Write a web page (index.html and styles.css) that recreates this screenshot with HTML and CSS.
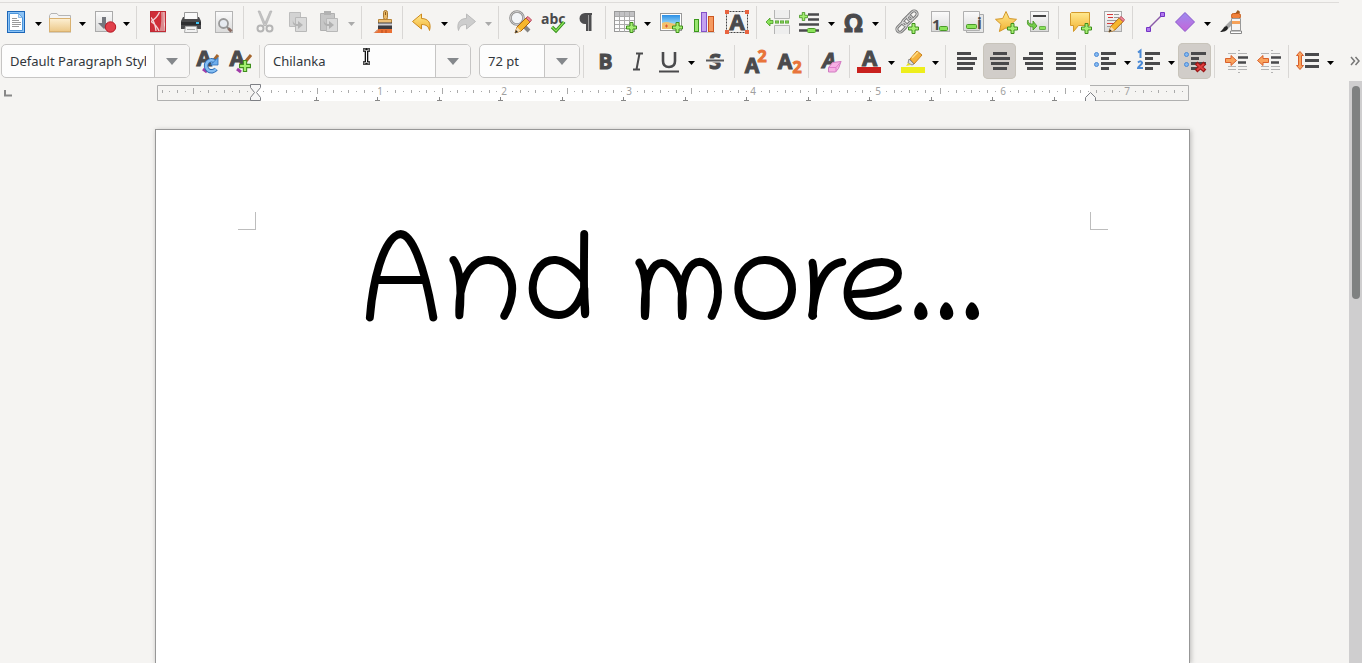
FILE: index.html
```html
<!DOCTYPE html>
<html lang="en">
<head>
<meta charset="utf-8">
<title>Writer</title>
<link rel="stylesheet" href="styles.css">
</head>
<body>
<svg class="defs" aria-hidden="true">
  <defs>
    <linearGradient id="g-paper" x1="0" y1="0" x2="0" y2="1"><stop offset="0" stop-color="#fbfbfb"/><stop offset="1" stop-color="#dadada"/></linearGradient>
    <linearGradient id="g-gold" x1="0" y1="0" x2="0" y2="1"><stop offset="0" stop-color="#ffe98f"/><stop offset="1" stop-color="#f2b233"/></linearGradient>
    <linearGradient id="g-folder" x1="0" y1="0" x2="0" y2="1"><stop offset="0" stop-color="#fdf0d4"/><stop offset="1" stop-color="#ecc888"/></linearGradient>
    <linearGradient id="g-violet" x1="0" y1="0" x2="0" y2="1"><stop offset="0" stop-color="#9b8cf0"/><stop offset="1" stop-color="#c765d8"/></linearGradient>
    <linearGradient id="g-sky" x1="0" y1="0" x2="0" y2="1"><stop offset="0" stop-color="#2b8fe6"/><stop offset="1" stop-color="#a8e2fa"/></linearGradient>
    <symbol id="plus" viewBox="0 0 11 11"><path d="M4 .5h3V4h3.500v3H7v3.500H4V7H.5V4H4z" fill="#a5ee72" stroke="#3f8f1c"/></symbol>
    <symbol id="pill" viewBox="0 0 9 5"><rect x=".5" y=".5" width="8" height="4" rx="1" fill="#8be35a" stroke="#4a9a28"/></symbol>
    <symbol id="arrow" viewBox="0 0 7 4"><path d="M0 0h7L3.500 4z" fill="currentColor"/></symbol>
    <symbol id="pencil" viewBox="0 0 18 18"><path d="M1 17l2-6L12 2l4 4-9 9z" fill="#f6b62c" stroke="#a8620d"/><path d="M12 2l2-1.500 3.500 3.500L16 6z" fill="#f08a9a" stroke="#b84a58"/><path d="M3 11l4 4-6 2z" fill="#f7dcae"/><path d="M1 17l1-3 2 2z" fill="#222"/></symbol>
  </defs>
</svg>

<header class="toolbars">
  <div class="bar bar-main" role="toolbar" aria-label="Standard">
    <button class="tool" aria-label="New"><svg viewBox="0 0 25 24"><rect x="2.500" y="1.500" width="17" height="21" fill="#8cc3f5" stroke="#1c66b8"/><path d="M4.500 3.500h9l4 4v13h-13z" fill="#fff" stroke="#4b96dc"/><path d="M13.500 3.500v4h4z" fill="#cfe3f6" stroke="#4b96dc" stroke-width=".6"/><path d="M7 8.500h5M7 10.500h7M7 12.500h9M7 14.500h9M7 16.500h7" stroke="#999"/></svg></button>
    <button class="drop" aria-label="New options"><svg><use href="#arrow"/></svg></button>
    <button class="tool" aria-label="Open"><svg viewBox="0 0 25 24"><path d="M.5 12V5.500L2 3.500h6l1.500 2H21.500V12z" fill="#f4f4f4" stroke="#b5b5b5"/><rect x=".5" y="8.500" width="21" height="13" fill="url(#g-folder)" stroke="#d9b170"/><path d="M0 22.500h22" stroke="#d4cdc0"/></svg></button>
    <button class="drop" aria-label="Open options"><svg><use href="#arrow"/></svg></button>
    <button class="tool" aria-label="Save"><svg viewBox="0 0 25 24"><rect x="2.500" y="1.500" width="17" height="20" fill="url(#g-paper)" stroke="#aaa"/><path d="M9 7h4v6h4l-6 6-6-6h4z" fill="#74777e"/><circle cx="17.500" cy="17" r="5.200" fill="#e0404a" stroke="#b81824"/></svg></button>
    <button class="drop" aria-label="Save options"><svg><use href="#arrow"/></svg></button>
    <span class="sep"></span>
    <button class="tool" aria-label="Export as PDF"><svg viewBox="0 0 25 24"><rect x="5" y="1" width="16" height="21" fill="#cf2e38"/><path d="M16 2h2.500c-.5 7 0 13 2 19h-6c2-6 2-13 1.500-19z" fill="#d98a8e"/><path d="M14.500 2C13 6 10 9 6 11.500 10 14 12.500 17 14 21M6 7.500c2.500 3 4.500 8 5 13.500M19 2c-.3 7 .2 13 1.500 19" fill="none" stroke="#f3d3d5" stroke-width="1.300"/><path d="M5.500 1.500h15v20h-15z" fill="none" stroke="#c02a34"/><path d="M5 22.500h16" stroke="#ccc"/></svg></button>
    <button class="tool" aria-label="Print"><svg viewBox="0 0 25 24"><path d="M6.500 9V2.500h13V9" fill="#fafafa" stroke="#999"/><path d="M5 7h1v2h14V7h1l2 4v8H3v-8z" fill="#4b4b4d"/><path d="M3 12h20v3H3z" fill="#2e2e30"/><path d="M18 12h3v2h-3z" fill="#3ec2f2"/><path d="M6.500 22.500l1-6h11l1 6z" fill="#f2f2f2" stroke="#aaa"/><path d="M9 19.500h8" stroke="#aaa"/></svg></button>
    <button class="tool" aria-label="Print preview"><svg viewBox="0 0 25 24"><rect x="4.500" y="1.500" width="17" height="21" fill="url(#g-paper)" stroke="#b4b4b4"/><circle cx="12.500" cy="13.500" r="4.500" fill="#e6eaf0" stroke="#999" stroke-width="1.800"/><path d="M16 17l2 2" stroke="#8a8a8a" stroke-width="2"/><path d="M17.500 18.500l3 3" stroke="#8d6f66" stroke-width="3"/></svg></button>
    <span class="sep"></span>
    <button class="tool" aria-label="Cut" disabled><svg viewBox="0 0 25 24"><path d="M6 1l2 0 6 14-2 1zM20 1h-2l-6 14 2 1z" fill="#c3c3c3" stroke="#b0b0b0" stroke-width=".6"/><circle cx="8.500" cy="18.500" r="3" fill="none" stroke="#b5b5b5" stroke-width="2"/><circle cx="17.500" cy="18.500" r="3" fill="none" stroke="#b5b5b5" stroke-width="2"/></svg></button>
    <button class="tool" aria-label="Copy" disabled><svg viewBox="0 0 25 24"><path d="M4.500 2.500h11v14h-11z" fill="#d3d3d3" stroke="#bdbdbd"/><path d="M10.500 7.500h11v14h-11z" fill="#dadada" stroke="#b8b8b8"/><path d="M8 10c0 3 2 4 5 4v-3l5 4-5 4v-3c-4 0-6-2-5-6z" fill="#b4b4b4"/></svg></button>
    <button class="tool" aria-label="Paste" disabled><svg viewBox="0 0 25 24"><path d="M2.500 3.500h14v17h-14z" fill="#c6c6c6" stroke="#b0b0b0"/><path d="M6 1h7v4H6z" fill="#b2b2b2"/><path d="M8.500 8.500h11v13h-11z" fill="#dadada" stroke="#b8b8b8"/><path d="M6 10c0 3 2 4 5 4v-3l5 4-5 4v-3c-4 0-6-2-5-6z" fill="#b0b0b0"/></svg></button>
    <button class="drop" aria-label="Paste options" disabled><svg><use href="#arrow"/></svg></button>
    <span class="sep"></span>
    <button class="tool" aria-label="Clone formatting"><svg viewBox="0 0 25 24"><rect x="13.500" y=".5" width="4" height="9" rx="2" fill="#e9b866" stroke="#a97831"/><path d="M15.500 2v3" stroke="#8c5c1c"/><path d="M8.500 9.500h13v4h-13z" fill="#edc078" stroke="#b88438"/><path d="M8 12.500h14V19H8z" fill="#3c3c41"/><path d="M8 14.500h14" stroke="#cfcfd4" stroke-width="2"/><path d="M8 19h14v4H3c3-1 5-1 5-4z" fill="#ea7034"/><path d="M5 22.500l3-3M12 20v3M16 20v3" stroke="#b94d1a"/></svg></button>
    <span class="sep"></span>
    <button class="tool" aria-label="Undo"><svg viewBox="0 0 25 24"><path d="M1.500 11.500l9-7.500v4.500c7 0 10 5 8 12-1-4-3-6-8-6V19z" fill="url(#g-gold)" stroke="#cd8a1d"/></svg></button>
    <button class="drop" aria-label="Undo history"><svg><use href="#arrow"/></svg></button>
    <button class="tool" aria-label="Redo" disabled><svg viewBox="0 0 25 24"><path d="M20.500 11.500l-9-7.500v4.500c-7 0-10 5-8 12 1-4 3-6 8-6V19z" fill="#cdcdcd" stroke="#bbb"/></svg></button>
    <button class="drop" aria-label="Redo history" disabled><svg><use href="#arrow"/></svg></button>
    <span class="sep"></span>
    <button class="tool" aria-label="Find and replace"><svg viewBox="0 0 25 24"><path d="M15 14l7 7" stroke="#858585" stroke-width="4"/><circle cx="10" cy="8" r="6.500" fill="#f2f5f8" stroke="#909090" stroke-width="2.600"/><circle cx="10" cy="8" r="6.500" fill="none" stroke="#d0d0d0"/><use href="#pencil" x="7" y="6" width="18" height="18"/></svg></button>
    <button class="tool" aria-label="Spelling"><svg viewBox="0 0 25 24"><text x="1" y="14" class="glyph" font-size="14">abc</text><path d="M12 17l4 4 8-9" fill="none" stroke="#36911c" stroke-width="3.200"/><path d="M12 17l4 4 8-9" fill="none" stroke="#8be35a" stroke-width="1.200"/></svg></button>
    <button class="tool" aria-label="Formatting marks"><svg viewBox="0 0 25 24"><path d="M19 3H12a5.500 5.500 0 0 0 0 11h1v7h2.500V5H16v16h2.500V5h.5z" fill="#4d4d4f"/></svg></button>
    <span class="sep"></span>
    <button class="tool" aria-label="Insert table"><svg viewBox="0 0 25 24"><rect x=".5" y="1.500" width="20" height="20" fill="#fcfcfc" stroke="#999"/><path d="M1 2h19v4H1z" fill="#c2c2c4"/><path d="M1 6.500h19M1 10.500h19M1 14.500h19M1 18.500h19M5.500 2v20M10.500 2v20M15.500 2v20" stroke="#aaa"/><use href="#plus" x="12" y="12" width="11" height="11"/></svg></button>
    <button class="drop" aria-label="Table options"><svg><use href="#arrow"/></svg></button>
    <button class="tool" aria-label="Insert image"><svg viewBox="0 0 25 24"><rect x="2.500" y="3.500" width="21" height="17" fill="#fff" stroke="#999"/><path d="M4 5h18v10H4z" fill="url(#g-sky)"/><path d="M4 13q4-2 9 0t9-1v7H4z" fill="#f2c26c"/><path d="M7 16h3M8.500 14.500v3" stroke="#dd5533"/><use href="#plus" x="14" y="12" width="11" height="11"/></svg></button>
    <button class="tool" aria-label="Insert chart"><svg viewBox="0 0 25 24"><path d="M2 22.500h22" stroke="#ccc"/><rect x="3.500" y="9.500" width="4" height="12" fill="#9ae570" stroke="#3c991c"/><rect x="10.500" y="2.500" width="5" height="19" fill="#c3a0f0" stroke="#8452c8"/><rect x="17.500" y="6.500" width="5" height="15" fill="#f59a60" stroke="#cc5620"/></svg></button>
    <button class="tool" aria-label="Insert text box"><svg viewBox="0 0 25 24"><rect x="2.500" y="1.500" width="21" height="21" fill="none" stroke="#444" stroke-dasharray="2 1"/><text x="13" y="20" class="glyph heavy" font-size="22" text-anchor="middle">A</text><path d="M1 0h4v4H1zM21 0h4v4h-4zM1 20h4v4H1zM21 20h4v4h-4z" fill="#e86440"/></svg></button>
    <span class="sep"></span>
    <button class="tool" aria-label="Page break"><svg viewBox="0 0 25 24"><path d="M9.500 0v8.500h15V0M9.500 24v-8.500h15V24" fill="#eee" stroke="#b4b4b4"/><path d="M1 12l4-4v2.500h3v3H5V16z" fill="#8be35a" stroke="#4a9a28" stroke-width=".8"/><path d="M10 12h15" stroke="#4a9a28" stroke-width="3" stroke-dasharray="4 1"/><path d="M10.500 12h14" stroke="#a5ee72" stroke-dasharray="3 2"/></svg></button>
    <button class="tool" aria-label="Insert field"><svg viewBox="0 0 25 24"><path d="M10 4.500h11M10 9.500h11M1 14.500h20M1 20.500h8" stroke="#4a4a4c" stroke-width="2.400"/><path d="M18 20.500h3" stroke="#4a4a4c" stroke-width="2.400"/><use href="#plus" x="1" y="2" width="9" height="9"/><use href="#pill" x="9" y="18" width="9" height="5"/></svg></button>
    <button class="drop" aria-label="Field options"><svg><use href="#arrow"/></svg></button>
    <button class="tool" aria-label="Special character"><svg viewBox="0 0 25 24"><text x="11.500" y="22" class="glyph heavy" font-size="25" text-anchor="middle">Ω</text></svg></button>
    <button class="drop" aria-label="Character options"><svg><use href="#arrow"/></svg></button>
    <span class="sep"></span>
    <button class="tool" aria-label="Hyperlink"><svg viewBox="0 0 25 24"><g fill="none" stroke="#777" stroke-width="3"><rect x="13" y="3" width="11" height="6" rx="3" transform="rotate(-45 18 6)"/><rect x="8" y="8" width="11" height="6" rx="3" transform="rotate(-45 13 11)"/><rect x="2" y="14" width="11" height="6" rx="3" transform="rotate(-45 8 17)"/></g><g fill="none" stroke="#d8d8d8"><rect x="13" y="3" width="11" height="6" rx="3" transform="rotate(-45 18 6)"/><rect x="8" y="8" width="11" height="6" rx="3" transform="rotate(-45 13 11)"/><rect x="2" y="14" width="11" height="6" rx="3" transform="rotate(-45 8 17)"/></g><use href="#plus" x="14" y="13" width="11" height="11"/></svg></button>
    <button class="tool" aria-label="Footnote"><svg viewBox="0 0 25 24"><rect x="4.500" y="1.500" width="18" height="20" fill="url(#g-paper)" stroke="#b0b0b0"/><text x="5" y="20" class="glyph" font-size="15">1</text><use href="#pill" x="12" y="16" width="9" height="5"/></svg></button>
    <button class="tool" aria-label="Endnote"><svg viewBox="0 0 25 24"><path d="M6.500 4.500h17v18h-17z" fill="#e6e6e6" stroke="#aaa"/><path d="M3.500 1.500h16v19h-16z" fill="url(#g-paper)" stroke="#b0b0b0"/><text x="17" y="19" class="glyph" font-size="16">i</text><rect x="6.500" y="14.500" width="10" height="4" rx="1" fill="#8be35a" stroke="#4a9a28"/></svg></button>
    <button class="tool" aria-label="Bookmark"><svg viewBox="0 0 25 24"><path d="M13 1.500l3.300 7 7.200.8-5.400 5 1.500 7.200-6.600-3.600-6.600 3.600L8 14.300l-5.500-5 7.200-.8z" fill="url(#g-gold)" stroke="#d3972a"/><use href="#plus" x="14" y="13" width="11" height="11"/></svg></button>
    <button class="tool" aria-label="Cross-reference"><svg viewBox="0 0 25 24"><rect x="4.500" y="1.500" width="18" height="20" fill="url(#g-paper)" stroke="#aaa"/><path d="M7 6h13" stroke="#444" stroke-width="2"/><path d="M2 10c0 4 3 4 5 4v-3l4 5-4 4v-3c-4 0-7-3-5-7z" fill="#74cc4c" stroke="#3f8f1c" stroke-width=".8"/><use href="#pill" x="13" y="16" width="7" height="4"/></svg></button>
    <span class="sep"></span>
    <button class="tool" aria-label="Insert comment"><svg viewBox="0 0 25 24"><path d="M4.500 2.500h18v13h-11l-5 6v-6h-3v-12z" fill="url(#g-gold)" stroke="#d39a2c"/><use href="#plus" x="14" y="13" width="11" height="11"/></svg></button>
    <button class="tool" aria-label="Track changes"><svg viewBox="0 0 25 24"><rect x="4.500" y="1.500" width="17" height="20" fill="url(#g-paper)" stroke="#aaa"/><path d="M7 4.500h6M8 7.500h5M7 13.500h7" stroke="#d83a3a"/><path d="M14 4.500h5M14 7.500h5M7 10.500h10M7 16.500h4" stroke="#999"/><use href="#pencil" x="8" y="6" width="17" height="17"/></svg></button>
    <span class="sep"></span>
    <button class="tool" aria-label="Insert line"><svg viewBox="0 0 25 24"><path d="M7 19L22 4" stroke="#8a5aa8" stroke-width="1.500"/><path d="M5.500 17.500h4v4h-4zM19.500 2.500h4v4h-4z" fill="#b078ee" stroke="#7434c4"/></svg></button>
    <button class="tool" aria-label="Basic shapes"><svg viewBox="0 0 25 24"><path d="M11 2.500l9.500 9.500-9.500 9.500L1.500 12z" fill="url(#g-violet)" stroke="#8858cc"/></svg></button>
    <button class="drop" aria-label="Shape options"><svg><use href="#arrow"/></svg></button>
    <button class="tool" aria-label="Show draw functions"><svg viewBox="0 0 25 24"><path d="M21 1l-3 4" stroke="#9b5a20" stroke-width="3"/><path d="M14 12l-7 7" stroke="#a5a5a5" stroke-width="4"/><path d="M9 16c-4 1-4 4-7 6 4 0 7-1 8-4z" fill="#222"/><rect x="13.500" y="3.500" width="9" height="5" rx="2" fill="#f0803a" stroke="#c45a18"/><path d="M13.500 8.500h9v12h-9z" fill="#f5f5f5" stroke="#999"/><path d="M14 11h8v3h-8z" fill="#f6a25a"/><path d="M12.500 21h11v2.500h-11z" fill="#fff" stroke="#888"/></svg></button>
  </div>

  <div class="bar bar-format" role="toolbar" aria-label="Formatting">
    <div class="combo combo-style"><input type="text" aria-label="Paragraph style" value="Default Paragraph Style"><button aria-label="Show styles"><svg><use href="#arrow"/></svg></button></div>
    <button class="tool" aria-label="Update style"><svg viewBox="0 0 25 24"><text x="10" y="17" class="glyph heavy" font-size="22" text-anchor="middle">A</text><path d="M9 20l4 3" stroke="#a03ca8" stroke-width="3"/><path d="M24 6l-4 5" stroke="#a5652c" stroke-width="3"/><path d="M22 20a5.500 5.500 0 1 1-1-7.500" fill="none" stroke="#2b6cb8" stroke-width="4.400"/><path d="M22 20a5.500 5.500 0 1 1-1-7.500" fill="none" stroke="#84bdf2" stroke-width="2.600"/><path d="M16.500 16h7.500V8.500z" fill="#6faeec" stroke="#2b6cb8" stroke-width=".8"/></svg></button>
    <button class="tool" aria-label="New style"><svg viewBox="0 0 25 24"><text x="10" y="17" class="glyph heavy" font-size="22" text-anchor="middle">A</text><path d="M10 20l4 3" stroke="#a03ca8" stroke-width="3"/><path d="M24 6l-5 6" stroke="#a5652c" stroke-width="3"/><use href="#plus" x="12" y="11" width="12" height="12"/></svg></button>
    <span class="sep"></span>
    <div class="combo combo-font"><input type="text" aria-label="Font name" value="Chilanka"><button aria-label="Show fonts"><svg><use href="#arrow"/></svg></button>
      <svg class="pointer" viewBox="0 0 9 17" aria-hidden="true"><path d="M1 2h2.500L4.500 3l1-1H8M4.500 3v11M1 15h2.500l1-1 1 1H8" fill="none" stroke="#111" stroke-width="3.600"/><path d="M1.500 2h2L4.500 3l1-1h2M4.500 3v11M1.500 15h2l1-1 1 1h2" fill="none" stroke="#fff" stroke-width="1"/></svg></div>
    <div class="combo combo-size"><input type="text" aria-label="Font size" value="72 pt"><button aria-label="Show sizes"><svg><use href="#arrow"/></svg></button></div>
    <span class="sep"></span>
    <button class="tool" aria-label="Bold"><svg viewBox="0 0 25 24"><text x="13.500" y="20" class="glyph heavy" font-size="21" text-anchor="middle">B</text></svg></button>
    <button class="tool" aria-label="Italic"><svg viewBox="0 0 25 24"><path d="M11 4.500h7M8 20.500h7M14.500 4.500l-3 16" stroke="#4a4a4c" stroke-width="2"/></svg></button>
    <button class="tool" aria-label="Underline"><svg viewBox="0 0 25 24"><path d="M5 3v9c0 4 2 6 6 6s6-2 6-6V3" fill="none" stroke="#4a4a4c" stroke-width="2.600"/><path d="M1 22.500h20" stroke="#4a4a4c" stroke-width="2"/></svg></button>
    <button class="drop" aria-label="Underline options"><svg><use href="#arrow"/></svg></button>
    <button class="tool" aria-label="Strikethrough"><svg viewBox="0 0 25 24"><text x="13" y="20" class="glyph heavy" font-size="22" text-anchor="middle">S</text><path d="M4 11.500h18" stroke="#f5f4f2" stroke-width="4"/><path d="M4 11.500h18" stroke="#5a5a5c" stroke-width="2"/></svg></button>
    <span class="sep"></span>
    <button class="tool" aria-label="Superscript"><svg viewBox="0 0 25 24"><text x="9" y="24" class="glyph heavy" font-size="21" text-anchor="middle">A</text><text x="19" y="13" class="glyph orange" font-size="16" text-anchor="middle">2</text></svg></button>
    <button class="tool" aria-label="Subscript"><svg viewBox="0 0 25 24"><text x="9" y="20" class="glyph heavy" font-size="21" text-anchor="middle">A</text><text x="21" y="24" class="glyph orange" font-size="16" text-anchor="middle">2</text></svg></button>
    <span class="sep"></span>
    <button class="tool" aria-label="Clear formatting"><svg viewBox="0 0 25 24"><text x="12" y="19" class="glyph heavy slant" font-size="21" text-anchor="middle">A</text><path d="M11.500 18.500l4-5 8.500-1-2.500 7-3 3.500h-7z" fill="#f6b0e4" stroke="#cf7cc0"/><path d="M12 18.500h7l5-6M19 18.500v4" fill="none" stroke="#e07ccb"/></svg></button>
    <span class="sep"></span>
    <button class="tool" aria-label="Font color"><svg viewBox="0 0 25 24"><text x="11.500" y="17" class="glyph heavy" font-size="22" text-anchor="middle">A</text><path d="M-1 18h24v6H-1z" fill="#c9211e"/></svg></button>
    <button class="drop" aria-label="Font color options"><svg><use href="#arrow"/></svg></button>
    <button class="tool" aria-label="Highlighting"><svg viewBox="0 0 25 24"><path d="M8 10L15 2l5 4-8 9z" fill="#f5b23c" stroke="#c8801c"/><path d="M10 9l6-6" stroke="#ffe08a" stroke-width="1.500"/><path d="M7 10l5 5-2 1-4-2z" fill="#ddd" stroke="#777" stroke-width=".8"/><path d="M6 14l3 2-5 1z" fill="#e8e020"/><path d="M-1 18h24v6H-1z" fill="#eeee1c"/></svg></button>
    <button class="drop" aria-label="Highlighting options"><svg><use href="#arrow"/></svg></button>
    <span class="sep"></span>
    <button class="tool" aria-label="Align left"><svg viewBox="0 0 25 24" class="lines"><path d="M3 4.500h14M3 9.500h20M3 14.500h18M3 19.500h16"/></svg></button>
    <button class="tool active" aria-label="Center" aria-pressed="true"><svg viewBox="0 0 25 24" class="lines"><path d="M6 4.500h14M3 9.500h20M4 14.500h18M6 19.500h14"/></svg></button>
    <button class="tool" aria-label="Align right"><svg viewBox="0 0 25 24" class="lines"><path d="M9 4.500h14M3 9.500h20M5 14.500h18M7 19.500h16"/></svg></button>
    <button class="tool" aria-label="Justify"><svg viewBox="0 0 25 24" class="lines"><path d="M3 4.500h20M3 9.500h20M3 14.500h20M3 19.500h20"/></svg></button>
    <span class="sep"></span>
    <button class="tool" aria-label="Bulleted list"><svg viewBox="0 0 25 24" class="lines"><path d="M7 4.500h15M7 9.500h8M7 14.500h15M7 19.500h8"/><g class="dots"><circle cx="2.500" cy="5.500" r="2"/><circle cx="2.500" cy="15.500" r="2"/></g></svg></button>
    <button class="drop" aria-label="Bullet options"><svg><use href="#arrow"/></svg></button>
    <button class="tool" aria-label="Numbered list"><svg viewBox="0 0 25 24" class="lines"><path d="M7 4.500h15M7 9.500h8M7 14.500h15M7 19.500h8"/><path class="digits" d="M0 3.500l2.500-2v7.500M0 13.500q2.500-2.500 4 0c.5 2-4 4-4 5.500h5"/></svg></button>
    <button class="drop" aria-label="Numbering options"><svg><use href="#arrow"/></svg></button>
    <button class="tool active" aria-label="No list" aria-pressed="true"><svg viewBox="0 0 25 24" class="lines"><path d="M9 4.500h15M9 9.500h8M9 14.500h15M9 19.500h8"/><g class="dots"><circle cx="4.500" cy="5.500" r="2"/><circle cx="4.500" cy="15.500" r="2"/></g><path class="cross-edge" d="M14 14l9 8M23 14l-9 8"/><path class="cross" d="M15 15l7 6M22 15l-7 6"/></svg></button>
    <span class="sep"></span>
    <button class="tool" aria-label="Increase indent"><svg viewBox="0 0 25 24"><path d="M5 4.500h8M15 4.500h9M5 17.500h8M15 17.500h9M5 20.500h8M15 20.500h9M15 1.500h2M15 23.500h2" stroke="#b4b4b4"/><path d="M15 8.500h10M15 13.500h8" stroke="#4a4a4c" stroke-width="2.600"/><path d="M2.500 9.500H8v-3l5.500 5L8 16.500v-3H2.500z" fill="#f9a25c" stroke="#d9602c"/></svg></button>
    <button class="tool" aria-label="Decrease indent"><svg viewBox="0 0 25 24"><path d="M5 4.500h8M15 4.500h9M5 17.500h8M15 17.500h9M5 20.500h8M15 20.500h9M15 1.500h2M15 23.500h2" stroke="#b4b4b4"/><path d="M15 8.500h10M15 13.500h8" stroke="#4a4a4c" stroke-width="2.600"/><path d="M12.500 9.500H7v-3l-5.500 5 5.500 5v-3h5.500z" fill="#f9a25c" stroke="#d9602c"/></svg></button>
    <span class="sep"></span>
    <button class="tool" aria-label="Line spacing"><svg viewBox="0 0 25 24" class="lines"><path d="M8 5.500h14M8 11.500h14M8 17.500h14"/><path class="spread" d="M3 2.500l3.500 4h-2v10h2L3 20.500l-3.500-4h2v-10h-2z"/></svg></button>
    <button class="drop" aria-label="Spacing options"><svg><use href="#arrow"/></svg></button>
    <button class="more" aria-label="More tools"><svg viewBox="0 0 10 10"><path d="M1 1l3.500 4L1 9M5.500 1L9 5 5.500 9" fill="none" stroke="#777" stroke-width="1.500"/></svg></button>
  </div>
</header>

<main class="workspace">
  <div class="desk">
    <div class="ruler-row">
      <svg class="tabstop" viewBox="0 0 8 7" aria-hidden="true"><path d="M1 0v5.500h7" fill="none" stroke="#888" stroke-width="2"/></svg>
      <svg class="ruler" viewBox="0 0 1032 20" aria-label="Ruler">
        <rect x="98" y="4" width="835" height="17" fill="#fff"/>
        <path d="M98 4.500H.5v15H98M933 4.500h98.500v15H933" fill="none" stroke="#b0b0b0"/>
        <g id="ticks"></g>
        <path d="M93.500 3.500h10v3l-4 5 4 5v3h-10v-3l4-5-4-5zM928.500 20.500v-4l5-5 5 5v4z" fill="#f7f7f7" stroke="#7d7f84"/>
      </svg>
    </div>
    <article class="page" id="page">
      <div class="margins"><i class="crop crop-left"></i><i class="crop crop-right"></i></div>
      <h1>And more...</h1>
    </article>
  </div>
  <div class="scrollbar" role="scrollbar" aria-label="Vertical" aria-controls="page" aria-valuenow="0"><div class="thumb"></div></div>
</main>
<script src="ruler.js"></script>
</body>
</html>
```
FILE: styles.css
```css
* { box-sizing: border-box; }
body {
  margin: 0;
  height: 100vh;
  display: flex;
  flex-direction: column;
  overflow: hidden;
  background: #f5f4f2;
  color: #31363b;
  font: 13px/20px "Noto Sans", sans-serif;
}
button { margin: 0; padding: 0; border: 0; background: none; color: #000; font: inherit; }
svg { display: block; }
.defs { position: absolute; width: 0; height: 0; }

.toolbars { flex: none; }
.bar { display: flex; align-items: center; height: 39px; padding-left: 1px; }
.bar-main { margin: 2px 23px 0 0; border-top: 1px solid #dedcda; }
.bar-format { height: 40px; }
.tool {
  flex: none;
  display: flex;
  align-items: center;
  justify-content: center;
  width: 33px;
  height: 36px;
}
.tool svg { width: 25px; height: 24px; overflow: visible; }
.active { background: #d1cdc9; border-radius: 5px; box-shadow: inset 0 0 0 1px #c8c4bb; }
.drop { flex: none; display: flex; align-items: center; width: 11px; height: 33px; padding: 3px 0 0 1px; }
.drop svg { width: 7px; height: 4px; }
.drop:disabled { color: #aaa; }
.sep { flex: none; width: 8px; height: 33px; background: linear-gradient(#d9d7d5, #d9d7d5) 3px 0 / 1px 100% no-repeat; }

.combo {
  position: relative;
  flex: none;
  display: flex;
  height: 34px;
  border: 1px solid #c6c5c4;
  border-radius: 5px;
  background: #fdfdfd;
}
.combo input {
  flex: 1;
  min-width: 0;
  margin: 0;
  padding: 0 8px;
  border: 0;
  background: none;
  color: inherit;
  font: inherit;
  outline: 0;
}
.combo button {
  display: flex;
  align-items: center;
  justify-content: center;
  width: 35px;
  border-left: 1px solid #c6c5c4;
  border-radius: 0 4px 4px 0;
  background: #f7f6f5;
  color: #85888c;
}
.combo button svg { width: 12px; height: 7px; }
.combo-style { width: 189px; }
.combo-font { width: 207px; margin-right: 8px; }
.combo-size { width: 101px; }
.pointer { position: absolute; left: 97px; top: 3px; width: 9px; height: 17px; }

.more { flex: none; margin-left: auto; margin-right: 2px; }
.more svg { width: 10px; height: 10px; }

.glyph { font-family: "Noto Sans", sans-serif; font-weight: 700; fill: #4a4a4c; }
.heavy { stroke: #4a4a4c; stroke-width: 1px; }
.orange { fill: #e8743b; stroke: #e8743b; stroke-width: 1px; }
.slant { font-style: italic; }
.lines { fill: none; stroke: #4a4a4c; stroke-width: 3; }
.lines .digits { stroke: #4b8ad6; stroke-width: 2; }
.lines .dots { fill: #84b8f0; stroke: #4b8ad6; stroke-width: 1; }
.lines .cross-edge { stroke: #9c1616; stroke-width: 4; }
.lines .cross { stroke: #e04040; stroke-width: 2; }
.lines .spread { fill: #f9a25c; stroke: #d9602c; stroke-width: 1; }

.workspace { flex: 1; min-height: 0; display: flex; }
.desk { flex: 1; min-width: 0; display: flex; flex-direction: column; align-items: center; padding-right: 4px; overflow: hidden; }
.ruler-row { flex: none; align-self: stretch; display: grid; grid-template-columns: 1fr auto 1fr; height: 21px; }
.tabstop { width: 8px; height: 7px; margin: 9px 0 0 4px; }
.ruler { width: 1032px; height: 20px; }
.ruler text { font: 10px "Noto Sans", sans-serif; fill: #a0a0a0; text-anchor: middle; }

.page {
  flex: 1;
  width: 1035px;
  max-width: 100%;
  margin-top: 27px;
  border: 1px solid #979797;
  border-bottom: 0;
  background: #fff;
  box-shadow: 1px 1px 5px rgba(0, 0, 0, .25);
}
.margins { display: flex; justify-content: space-between; padding: 82px 81px 0 82px; }
.crop { width: 18px; height: 18px; border: 0 solid #bdbdbd; border-bottom-width: 1px; }
.crop-left { border-right-width: 1px; }
.crop-right { border-left-width: 1px; }
h1 {
  margin: 0;
  color: #000;
  font: 400 125px/132px Chilanka, Lato, sans-serif;
  text-align: center;
}

.scrollbar { flex: none; width: 13px; padding: 5px 2px 0 3px; background: #cfcecf; }
.thumb { height: 213px; border-radius: 4px; background: #7f8181; }
```
FILE: ruler.js
```js
const ns = "http://www.w3.org/2000/svg";
const group = document.getElementById("ticks");
const inch = 124.6;
const origin = 98;

function add(name, attrs, text) {
  const el = document.createElementNS(ns, name);
  for (const key in attrs) el.setAttribute(key, attrs[key]);
  if (text) el.textContent = text;
  group.appendChild(el);
}

for (let i = -12; i < 120; i++) {
  const x = Math.round(origin + i * inch / 16);
  if (i === 0 || x > 1028) continue;
  if (i % 16 === 0) {
    add("text", { x, y: 14 }, String(i / 16));
    continue;
  }
  const h = i % 8 === 0 ? 6 : i % 2 === 0 ? 3 : 1;
  add("rect", { x, y: 10 - Math.floor(h / 2), width: 1, height: h, fill: "#aaa" });
}

for (let n = 1; n < 14; n++) {
  const x = Math.round(97 + n * 61.5);
  add("path", { d: `M${x - 2} 19.5h5M${x + 0.5} 16v3`, stroke: "#888" });
}
```
